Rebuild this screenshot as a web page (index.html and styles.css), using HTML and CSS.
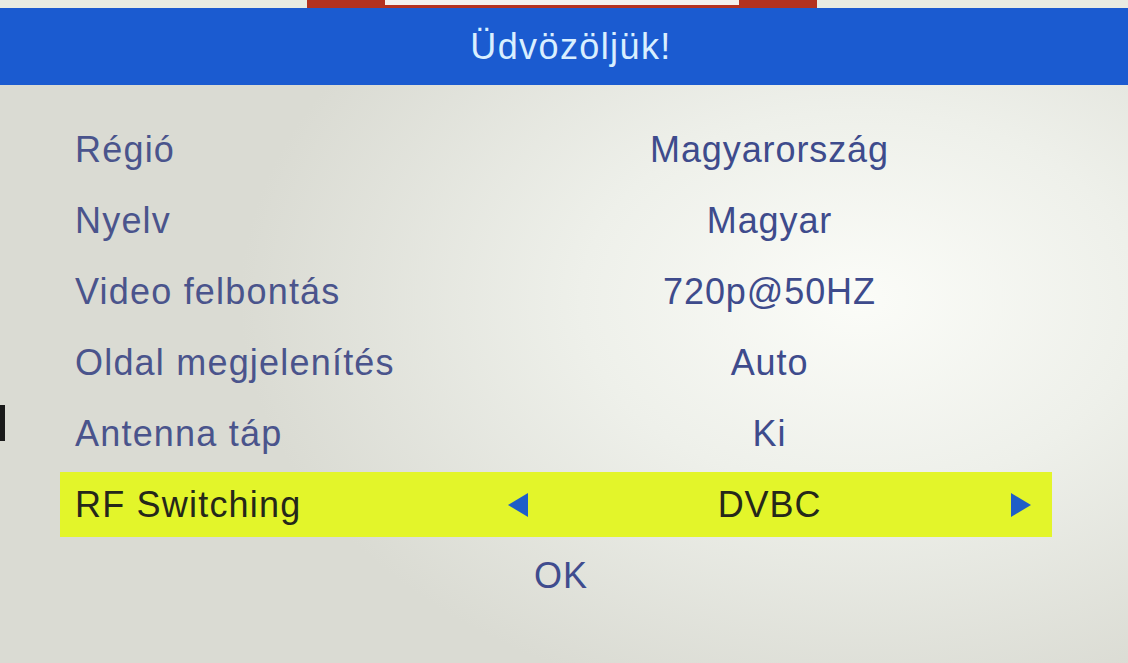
FILE: index.html
```html
<!DOCTYPE html>
<html lang="hu">
<head>
    <meta charset="UTF-8">
    <meta name="viewport" content="width=device-width, initial-scale=1.0">
    <title>Üdvözöljük!</title>
    <link rel="stylesheet" href="styles.css">
</head>
<body>
    <div class="screen">
        <div class="top-strip">
            <div class="tab"><span class="tab-inner"></span></div>
        </div>

        <header class="title-bar">
            <h1>Üdvözöljük!</h1>
        </header>

        <main class="menu">
            <div class="menu-row">
                <span class="label">Régió</span>
                <span class="arrow"></span>
                <span class="value">Magyarország</span>
                <span class="arrow"></span>
            </div>
            <div class="menu-row">
                <span class="label">Nyelv</span>
                <span class="arrow"></span>
                <span class="value">Magyar</span>
                <span class="arrow"></span>
            </div>
            <div class="menu-row">
                <span class="label">Video felbontás</span>
                <span class="arrow"></span>
                <span class="value">720p@50HZ</span>
                <span class="arrow"></span>
            </div>
            <div class="menu-row">
                <span class="label">Oldal megjelenítés</span>
                <span class="arrow"></span>
                <span class="value">Auto</span>
                <span class="arrow"></span>
            </div>
            <div class="menu-row">
                <span class="label">Antenna táp</span>
                <span class="arrow"></span>
                <span class="value">Ki</span>
                <span class="arrow"></span>
            </div>
            <div class="menu-row selected">
                <span class="label">RF Switching</span>
                <span class="arrow">
                    <svg width="22" height="26" viewBox="0 0 22 26"><polygon points="1,13 21,1 21,25" /></svg>
                </span>
                <span class="value">DVBC</span>
                <span class="arrow">
                    <svg width="22" height="26" viewBox="0 0 22 26"><polygon points="21,13 1,1 1,25" /></svg>
                </span>
            </div>
            <div class="ok-row">OK</div>
        </main>

        <span class="edge-mark"></span>
    </div>
</body>
</html>
```

FILE: styles.css
```css
body {
    margin: 0;
    font-family: 'Liberation Sans', Arial, sans-serif;
    background-color: #dcded6;
}
.screen {
    position: relative;
    width: 1128px;
    height: 663px;
    overflow: hidden;
    background: radial-gradient(ellipse 620px 420px at 860px 300px, #fbfcf8 0%, #eef0ea 45%, #dadbd3 100%);
}
.top-strip {
    height: 8px;
    background-color: #e9ece2;
    display: flex;
    justify-content: center;
}
.tab {
    width: 510px;
    margin-right: 4px;
    background-color: #b3321f;
    display: flex;
    justify-content: center;
}
.tab-inner {
    width: 354px;
    height: 5px;
    background-color: #f3f1ec;
}
.title-bar {
    height: 77px;
    background-color: #1b5bd0;
    display: flex;
    align-items: center;
    justify-content: center;
    padding-left: 14px;
}
.title-bar h1 {
    margin: 0;
    font-size: 36px;
    font-weight: normal;
    letter-spacing: 1.4px;
    color: #d9efff;
}
.menu {
    padding-top: 32px;
    display: flex;
    flex-direction: column;
    gap: 6px;
}
.menu-row {
    height: 65px;
    margin: 0 76px 0 60px;
    padding: 0 16px 0 15px;
    display: grid;
    grid-template-columns: 428px 30px 1fr 30px;
    align-items: center;
    font-size: 36px;
    color: #4a548c;
}
.label {
    letter-spacing: 1.2px;
}
.value {
    text-align: center;
    letter-spacing: 0.9px;
    color: #3e4b8c;
}
.arrow {
    display: flex;
    justify-content: center;
    align-items: center;
}
.arrow polygon {
    fill: #1f5ec8;
}
.menu-row.selected {
    background-color: #e3f52a;
    color: #25271a;
}
.menu-row.selected .value {
    color: #25271a;
}
.ok-row {
    height: 65px;
    line-height: 65px;
    text-align: center;
    padding-right: 6px;
    font-size: 36px;
    letter-spacing: 0.9px;
    color: #3f4c8e;
}
.edge-mark {
    position: absolute;
    left: 0;
    top: 405px;
    width: 5px;
    height: 36px;
    background-color: #1a1a1a;
}
```
